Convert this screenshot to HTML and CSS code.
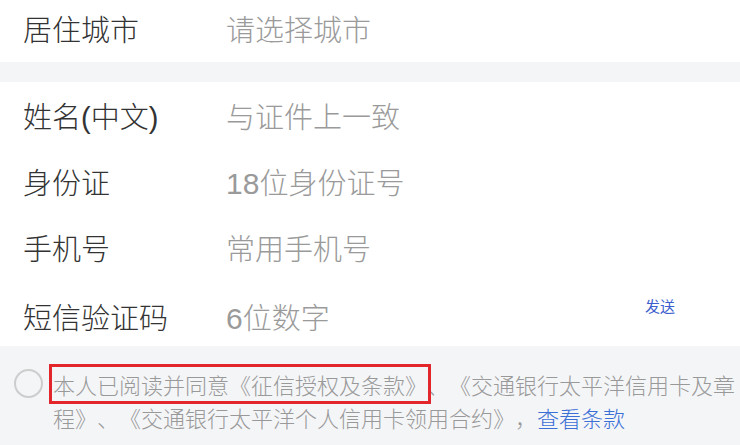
FILE: index.html
```html
<!DOCTYPE html>
<html lang="zh-CN">
<head>
<meta charset="utf-8">
<link rel="stylesheet" href="styles.css">
</head>
<body>
<div class="page">
  <div class="row row-first">
    <span class="label">居住城市</span>
    <span class="placeholder">请选择城市</span>
  </div>
  <div class="band"></div>
  <div class="row">
    <span class="label">姓名<span class="paren">(</span>中文<span class="paren">)</span></span>
    <span class="placeholder">与证件上一致</span>
  </div>
  <div class="row">
    <span class="label">身份证</span>
    <span class="placeholder"><span class="num">18</span>位身份证号</span>
  </div>
  <div class="row">
    <span class="label">手机号</span>
    <span class="placeholder">常用手机号</span>
  </div>
  <div class="row row-sms">
    <span class="label">短信验证码</span>
    <span class="placeholder"><span class="num">6</span>位数字</span>
    <span class="send">发送</span>
  </div>
  <div class="agree">
    <span class="circle"></span>
    <p class="agree-text"><span class="mark">本人已阅读并同意《征信授权及条款》</span>、《交通银行太平洋信用卡及章程》、《交通银行太平洋个人信用卡领用合约》，<a class="link">查看条款</a></p>
  </div>
</div>
</body>
</html>
```

FILE: styles.css
```css
* { box-sizing: border-box; }
html, body {
  margin: 0;
  padding: 0;
  background: #fff;
  overflow: hidden;
}
.page {
  width: 740px;
  height: 445px;
  font-family: "Noto Sans CJK SC", "Noto Sans", sans-serif;
  font-weight: 300;
  text-spacing-trim: space-all;
  display: flex;
  flex-direction: column;
}
.row {
  height: 66px;
  display: flex;
  align-items: center;
  padding-left: 23px;
  font-size: 29px;
}
.row-first {
  height: 62px;
  padding-bottom: 6px;
}
.band {
  height: 20px;
  background: #f4f5f7;
}
.label {
  width: 203px;
  color: #333;
  flex: none;
}
.paren {
  font-family: "Liberation Sans", sans-serif;
  font-weight: 400;
}
.placeholder {
  color: #9a9a9a;
}
.num {
  font-family: "Liberation Sans", sans-serif;
  font-weight: 400;
  font-size: 30px;
}
.row-sms { padding-top: 6px; }
.send {
  align-self: flex-start;
  margin-top: 9px;
  margin-left: auto;
  margin-right: 65px;
  font-size: 15px;
  font-weight: 400;
  color: #3d5fcd;
}
.agree {
  flex: 1;
  background: #f4f5f7;
  display: flex;
  align-items: flex-start;
  padding: 22px 0 0 14px;
}
.circle {
  flex: none;
  width: 29px;
  height: 29px;
  border: 2px solid #cdcdcd;
  border-radius: 50%;
  margin-top: 1px;
  margin-right: 10px;
}
.agree-text {
  margin: 0;
  font-size: 22px;
  line-height: 33px;
  color: #999;
}
.mark {
  outline: 3px solid #e3262b;
  outline-offset: 1px;
}
.link {
  color: #3b6fd6;
}
```
